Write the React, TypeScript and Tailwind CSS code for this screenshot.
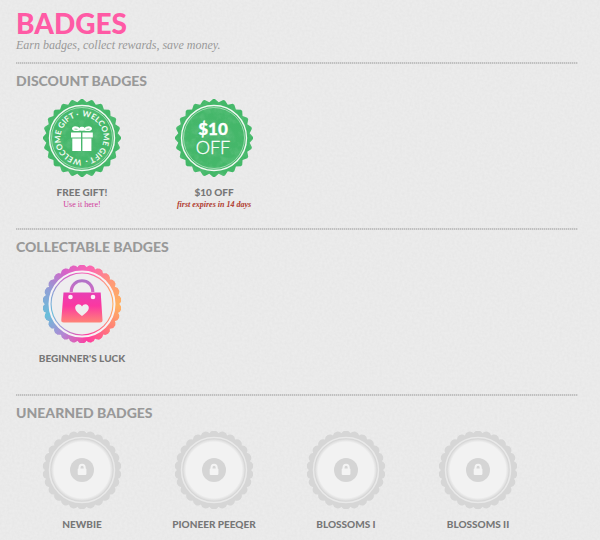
import React from "react";

const C = 39;

function pt(r: number, a: number) {
  return `${(C + r * Math.cos(a)).toFixed(2)} ${(C + r * Math.sin(a)).toFixed(2)}`;
}

function scallop(count: number, r: number, bump: number) {
  const step = (Math.PI * 2) / count;
  let d = `M${pt(r, 0)}`;
  for (let i = 1; i <= count; i++) d += `A${bump} ${bump} 0 0 1 ${pt(r, i * step)}`;
  return d + "Z";
}

function saw(count: number, outer: number, inner: number) {
  const step = (Math.PI * 2) / count;
  let d = "";
  for (let i = 0; i < count; i++) {
    d += `${i ? "L" : "M"}${pt(outer, (i - 0.09) * step)}L${pt(outer, (i + 0.09) * step)}L${pt(inner, (i + 0.5) * step)}`;
  }
  return d + "Z";
}

const scallopPath = scallop(26, 37, 5);
const sawPath = saw(24, 39, 36);

function GreenSeal({ children }: { children: React.ReactNode }) {
  return (
    <svg viewBox="0 0 78 78" className="size-[78px]" aria-hidden="true">
      <defs>
        <radialGradient id="green" cx="50%" cy="50%" r="50%">
          <stop offset="0" stopColor="#47b56c" />
          <stop offset="1" stopColor="#43b868" />
        </radialGradient>
        <filter id="worn" x="0" y="0" width="1" height="1">
          <feTurbulence type="fractalNoise" baseFrequency="0.12" numOctaves="4" seed="8" />
          <feColorMatrix values="0 0 0 0 1  0 0 0 0 1  0 0 0 0 1  0 0 0 1.6 -0.7" />
          <feComposite in2="SourceGraphic" operator="in" />
        </filter>
      </defs>
      <path d={sawPath} fill="url(#green)" />
      <path d={sawPath} fill="#fff" filter="url(#worn)" opacity="0.16" />
      <circle cx={C} cy={C} r="32.500" fill="none" stroke="#f0f8f2" strokeWidth="1.4" />
      <circle cx={C} cy={C} r="30.500" fill="none" stroke="#c4e6cf" strokeWidth="0.7" />
      {children}
    </svg>
  );
}

function GiftBadge() {
  return (
    <GreenSeal>
      <defs>
        <path id="ring" d="M39 17.5A21.5 21.5 0 1 1 38.9 17.5" />
        <path id="ringHalf" d="M39 60.5A21.5 21.5 0 1 1 39.1 60.5" />
      </defs>
      <g fill="#f3faf5" fontFamily="Lato, sans-serif" fontWeight="700" fontSize="8">
        <text><textPath href="#ring" startOffset="0">WELCOME GIFT ·</textPath></text>
        <text><textPath href="#ringHalf" startOffset="0">WELCOME GIFT ·</textPath></text>
      </g>
      <g fill="#fff">
        <path d="M28 33.5h10v5H28zM39.4 33.5h10.400v5H39.400zM29.300 39.500H38v12.500h-8.700zM39.400 39.500h9v12.500h-9z" />
        <path d="M37 31.500c-3 .9-8 1-8-1.700 0-3.400 5.500-3.600 8-.2zM41 31.500c3 .9 8 1 8-1.700 0-3.400-5.500-3.600-8-.2z" />
        <rect x="36.500" y="27.800" width="5" height="4" rx="1.500" />
      </g>
      <path d="M31.500 30l3 .3M46.500 30l-3 .3" stroke="#47b56c" strokeWidth="0.7" />
    </GreenSeal>
  );
}

function TenOffBadge() {
  return (
    <GreenSeal>
      <g fill="#fff" textAnchor="middle" fontFamily="Lato, sans-serif">
        <text x="38" y="36" fontWeight="900" fontSize="17" stroke="#fff" strokeWidth="0.3">$10</text>
        <text x="38" y="55" fontWeight="300" fontSize="18" stroke="#fff" strokeWidth="0.3">OFF</text>
      </g>
    </GreenSeal>
  );
}

// Rim colours, clockwise from the right-hand edge.
const rim = [
  [255, 178, 96],
  [255, 125, 120],
  [255, 62, 160],
  [178, 135, 212],
  [104, 190, 218],
  [143, 160, 214],
  [214, 98, 200],
  [252, 100, 178],
  [255, 152, 120],
];

function rimColour(t: number) {
  const x = t * rim.length;
  const i = Math.floor(x) % rim.length;
  const f = x - Math.floor(x);
  const next = rim[(i + 1) % rim.length];
  return `rgb(${rim[i].map((v, k) => Math.round(v + (next[k] - v) * f)).join(",")})`;
}

function BagBadge() {
  const n = 90;
  const wedges = Array.from({ length: n }, (_, i) => {
    const a = (i / n) * Math.PI * 2;
    const b = ((i + 1.3) / n) * Math.PI * 2;
    return <path key={i} d={`M${C} ${C}L${pt(42, a)}L${pt(42, b)}Z`} fill={rimColour(i / n)} />;
  });
  return (
    <svg viewBox="0 0 78 78" className="size-[78px]" aria-hidden="true">
      <defs>
        <clipPath id="rim"><path d={scallopPath} /></clipPath>
        <linearGradient id="bag" x1="0" y1="0" x2="0" y2="1">
          <stop offset="0" stopColor="#e83fb4" />
          <stop offset="0.45" stopColor="#fb38a0" />
          <stop offset="1" stopColor="#ff8478" />
        </linearGradient>
        <linearGradient id="handle" x1="0" y1="0" x2="0" y2="1">
          <stop offset="0" stopColor="#b173c8" />
          <stop offset="1" stopColor="#d468c4" />
        </linearGradient>
      </defs>
      <g clipPath="url(#rim)">{wedges}</g>
      <circle cx={C} cy={C} r="32.500" fill="none" stroke="#f6f2f5" strokeWidth="2" />
      <circle cx={C} cy={C} r="30.400" fill="#efeeef" />
      <path d="M28.200 27c0-15 21.600-15 21.600 0" fill="none" stroke="url(#handle)" strokeWidth="3.200" />
      <path
        fillRule="evenodd"
        fill="url(#bag)"
        d="M20.500 27.500h37.200l1.800 27.500q.2 2.500-2.500 2.500H20.800q-2.700 0-2.500-2.500zM39 51c-3.500-3-6.800-5.200-6.800-8.300 0-4 5-4.800 6.800-1.300 1.800-3.500 6.800-2.700 6.800 1.300 0 3.100-3.300 5.300-6.800 8.300z"
      />
      <circle cx="27.500" cy="32" r="2.300" fill="#fbeff7" />
      <circle cx="50" cy="32" r="2.300" fill="#fbeff7" />
    </svg>
  );
}

function LockedBadge() {
  return (
    <svg viewBox="0 0 78 78" className="size-[78px]" aria-hidden="true">
      <defs>
        <radialGradient id="dish" cx="50%" cy="50%" r="50%">
          <stop offset="0.9" stopColor="#f2f2f2" />
          <stop offset="1" stopColor="#dadada" />
        </radialGradient>
      </defs>
      <path d={scallopPath} fill="#d6d6d6" />
      <circle cx={C} cy={C} r="32.500" fill="none" stroke="#e9e9e9" strokeWidth="1.500" />
      <circle cx={C} cy={C} r="31" fill="url(#dish)" />
      <circle cx={C} cy={C} r="12" fill="#d5d5d5" />
      <path d="M36.500 39v-2.300c0-4 5.200-4 5.200 0V39" fill="none" stroke="#f4f4f4" strokeWidth="2" />
      <rect x="34.700" y="37.500" width="8.700" height="6.500" rx="1" fill="#f4f4f4" />
    </svg>
  );
}

function Badge({ art, name, children }: { art: React.ReactNode; name: string; children?: React.ReactNode }) {
  return (
    <li className="flex w-[132px] flex-col items-center text-center">
      {art}
      <h3 className="mt-2 font-['Lato',sans-serif] text-[10px] leading-[14px] font-black text-[#777]">{name}</h3>
      <div className="font-['Liberation_Serif',serif] text-[8px] leading-3">{children}</div>
    </li>
  );
}

function Section({ title, children }: { title: string; children: React.ReactNode }) {
  return (
    <section className="h-[166px]">
      <hr className="h-[2px] border-0 bg-[repeating-linear-gradient(90deg,#c0c0c0_0_1px,#dadada_1px_2px)]" />
      <h2 className="pt-[7px] font-['Lato',sans-serif] text-[14px] leading-5 font-black text-[#999]">{title}</h2>
      <ul className="mt-2 flex flex-wrap">{children}</ul>
    </section>
  );
}

export default function App() {
  return (
    <div className="relative min-h-screen overflow-hidden bg-[#e8e8e8]">
      <svg className="absolute inset-0 h-full w-full" aria-hidden="true">
        <filter id="paper" x="0" y="0" width="100%" height="100%">
          <feTurbulence type="fractalNoise" baseFrequency="0.4" numOctaves="2" seed="3" />
          <feColorMatrix values="0.4 0 0 0 0.7  0.4 0 0 0 0.7  0.4 0 0 0 0.7  0 0 0 0 0.16" />
        </filter>
        <rect width="100%" height="100%" filter="url(#paper)" />
      </svg>
      <main className="relative max-h-screen pt-2 pr-[22px] pl-4">
        <header className="h-[54px]">
          <h1 className="font-['Lato',sans-serif] text-[28px] leading-[30px] font-black text-[#ff5aa5]">BADGES</h1>
          <p className="font-['Liberation_Serif',serif] text-[12px] leading-[14px] text-[#999] italic">
            Earn badges, collect rewards, save money.
          </p>
        </header>
        <Section title="DISCOUNT BADGES">
          <Badge art={<GiftBadge />} name="FREE GIFT!">
            <a href="#gift" className="text-[#d0389a]">Use it here!</a>
          </Badge>
          <Badge art={<TenOffBadge />} name="$10 OFF">
            <span className="font-bold text-[#b03a2e] italic">first expires in 14 days</span>
          </Badge>
        </Section>
        <Section title="COLLECTABLE BADGES">
          <Badge art={<BagBadge />} name="BEGINNER'S LUCK" />
        </Section>
        <Section title="UNEARNED BADGES">
          <Badge art={<LockedBadge />} name="NEWBIE" />
          <Badge art={<LockedBadge />} name="PIONEER PEEQER" />
          <Badge art={<LockedBadge />} name="BLOSSOMS I" />
          <Badge art={<LockedBadge />} name="BLOSSOMS II" />
        </Section>
      </main>
    </div>
  );
}
